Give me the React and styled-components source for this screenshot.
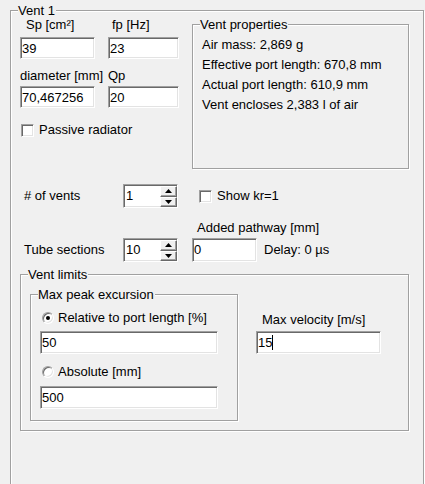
import React from "react";
import styled, { createGlobalStyle } from "styled-components";

const GlobalStyle = createGlobalStyle`
  html, body {
    margin: 0;
    padding: 0;
    background: #f0f0f0;
    overflow: hidden;
  }
  body {
    font-family: "Liberation Sans", Arial, sans-serif;
    font-size: 13px;
    color: #000;
  }
`;

const Page = styled.div`
  box-sizing: border-box;
  width: 425px;
  height: 484px;
  overflow: hidden;
  padding: 10px 2px 0 10px;
`;

// etched group box, caption sits on the top line
const Group = styled.div`
  position: relative;
  box-sizing: border-box;
  flex: none;
  width: ${(p) => p.$w}px;
  height: ${(p) => p.$h}px;
  margin: ${(p) => p.$m || 0};
  border: 1px solid #a0a0a0;
  box-shadow: inset 1px 1px 0 #fff, 1px 1px 0 #fff;
`;

const Caption = styled.span`
  position: absolute;
  top: -8px;
  left: 7px;
  padding-right: 1px;
  line-height: 16px;
  background: #f0f0f0;
  white-space: nowrap;
`;

const Top = styled.div`
  display: flex;
  padding-left: 9px;
`;

const LeftCol = styled.div`
  width: 172px;
  display: flex;
  flex-direction: column;
`;

const Pair = styled.div`
  display: grid;
  grid-template-columns: 88px 84px;
  margin-top: ${(p) => p.$mt}px;
`;

const Label = styled.span`
  line-height: 16px;
  white-space: nowrap;
  padding-left: ${(p) => p.$pl || 0}px;
`;

const Edit = styled.div`
  box-sizing: border-box;
  width: ${(p) => p.$w}px;
  height: ${(p) => p.$h || 22}px;
  padding-left: 1px;
  display: flex;
  align-items: center;
  background: #fff;
  border: 1px solid;
  border-color: #a0a0a0 #fff #fff #a0a0a0;
  box-shadow: inset 1px 1px 0 #696969, inset -1px -1px 0 #e3e3e3;
  white-space: nowrap;
`;

const Caret = styled.span`
  display: inline-block;
  width: 1px;
  height: 15px;
  background: #000;
`;

const CheckRow = styled.label`
  display: flex;
  align-items: center;
  gap: ${(p) => p.$gap || 5}px;
  line-height: 16px;
  margin-top: ${(p) => p.$mt || 0}px;
  padding-left: ${(p) => p.$pl || 0}px;
  white-space: nowrap;
`;

const CheckBox = styled.span`
  box-sizing: border-box;
  flex: none;
  width: 13px;
  height: 13px;
  background: #fff;
  border: 1px solid;
  border-color: #a0a0a0 #fff #fff #a0a0a0;
  box-shadow: inset 1px 1px 0 #696969, inset -1px -1px 0 #e3e3e3;
`;

const Radio = styled.span`
  box-sizing: border-box;
  flex: none;
  position: relative;
  width: 12px;
  height: 12px;
  border-radius: 50%;
  background: #fff;
  border: 1px solid;
  border-color: #a0a0a0 #fff #fff #a0a0a0;
  box-shadow: inset 1px 1px 0 #696969, inset -1px -1px 0 #e3e3e3;

  &::after {
    content: "";
    display: ${(p) => (p.$on ? "block" : "none")};
    position: absolute;
    left: 3px;
    top: 3px;
    width: 4px;
    height: 4px;
    border-radius: 50%;
    background: #000;
  }
`;

const Info = styled.div`
  padding: 10px 0 0 9px;
  line-height: 20px;
  white-space: nowrap;
`;

const Mid = styled.div`
  display: grid;
  grid-template-columns: 99px 69px 200px;
  grid-template-rows: 24px 30px 24px;
  align-items: center;
  padding-left: 13px;
  margin-top: 15px;
`;

const Spin = styled.div`
  box-sizing: border-box;
  width: 55px;
  height: 24px;
  display: flex;
  background: #fff;
  border: 1px solid;
  border-color: #a0a0a0 #fff #fff #a0a0a0;
  box-shadow: inset 1px 1px 0 #696969, inset -1px -1px 0 #e3e3e3;
  padding: 1px 0 0 1px;
`;

const SpinValue = styled.span`
  flex: 1;
  padding-left: 1px;
  line-height: 20px;
`;

const SpinButtons = styled.div`
  width: 17px;
  display: flex;
  flex-direction: column;
`;

const SpinButton = styled.div`
  flex: 1;
  display: flex;
  align-items: center;
  justify-content: center;
  background: #f0f0f0;
  border: 1px solid;
  border-color: #fff #696969 #696969 #fff;
  box-shadow: inset -1px -1px 0 #a0a0a0;
`;

const Cell = styled.div`
  display: flex;
  align-items: center;
  align-self: ${(p) => p.$align || "center"};
  padding-left: ${(p) => p.$pl || 0}px;
  padding-bottom: ${(p) => p.$pb || 0}px;
  gap: ${(p) => p.$gap || 0}px;
  grid-column: ${(p) => p.$col || "auto"};
  line-height: 16px;
  white-space: nowrap;
`;

const Limits = styled.div`
  display: flex;
  padding: 19px 0 0 9px;
`;

const Stack = styled.div`
  display: flex;
  flex-direction: column;
  align-items: flex-start;
  padding-left: ${(p) => p.$pl || 0}px;
  margin-left: ${(p) => p.$ml || 0}px;
`;

const Gap = styled.div`
  height: ${(p) => p.$h}px;
  flex: none;
`;

const Arrow = ({ up }) => (
  <svg width="7" height="4" viewBox="0 0 7 4">
    <polygon points={up ? "3.5,0 7,4 0,4" : "0,0 7,0 3.5,4"} fill="#000" />
  </svg>
);

const SpinField = ({ value }) => (
  <Spin>
    <SpinValue>{value}</SpinValue>
    <SpinButtons>
      <SpinButton>
        <Arrow up />
      </SpinButton>
      <SpinButton>
        <Arrow />
      </SpinButton>
    </SpinButtons>
  </Spin>
);

export default function App() {
  return (
    <>
      <GlobalStyle />
      <Page>
        <Group $w={414} $h={475}>
          <Caption>Vent 1</Caption>

          <Top>
            <LeftCol>
              <Pair $mt={6}>
                <Label $pl={6}>Sp [cm²]</Label>
                <Label $pl={4}>fp [Hz]</Label>
              </Pair>
              <Pair $mt={4}>
                <Edit $w={75}>39</Edit>
                <Edit $w={71}>23</Edit>
              </Pair>
              <Pair $mt={9}>
                <Label>diameter [mm]</Label>
                <Label $pl={-1}>Qp</Label>
              </Pair>
              <Pair $mt={2}>
                <Edit $w={75}>70,467256</Edit>
                <Edit $w={71}>20</Edit>
              </Pair>
              <CheckRow $mt={14} $pl={1}>
                <CheckBox />
                Passive radiator
              </CheckRow>
            </LeftCol>

            <Group $w={217} $h={145} $m="13px 0 0 0">
              <Caption>Vent properties</Caption>
              <Info>
                <div>Air mass: 2,869 g</div>
                <div>Effective port length: 670,8 mm</div>
                <div>Actual port length: 610,9 mm</div>
                <div>Vent encloses 2,383 l of air</div>
              </Info>
            </Group>
          </Top>

          <Mid>
            <Cell># of vents</Cell>
            <SpinField value="1" />
            <Cell $pl={7}>
              <CheckRow>
                <CheckBox />
                Show kr=1
              </CheckRow>
            </Cell>

            <Cell $col="3" $align="end" $pl={5} $pb={2}>
              Added pathway [mm]
            </Cell>

            <Cell>Tube sections</Cell>
            <SpinField value="10" />
            <Cell $gap={7}>
              <Edit $w={65} $h={24}>0</Edit>
              Delay: 0 µs
            </Cell>
          </Mid>

          <Group $w={389} $h={157} $m="12px 0 0 9px">
            <Caption>Vent limits</Caption>
            <Limits>
              <Group $w={208} $h={127}>
                <Caption>Max peak excursion</Caption>
                <Stack $pl={9}>
                  <Gap $h={15} />
                  <CheckRow $pl={2} $gap={4}>
                    <Radio $on />
                    Relative to port length [%]
                  </CheckRow>
                  <Gap $h={5} />
                  <Edit $w={178} $h={23}>50</Edit>
                  <Gap $h={10} />
                  <CheckRow $pl={2} $gap={4}>
                    <Radio />
                    Absolute [mm]
                  </CheckRow>
                  <Gap $h={6} />
                  <Edit $w={178} $h={23}>500</Edit>
                </Stack>
              </Group>

              <Stack $ml={18}>
                <Gap $h={18} />
                <Label $pl={6}>Max velocity [m/s]</Label>
                <Gap $h={3} />
                <Edit $w={125} $h={23}>
                  15
                  <Caret />
                </Edit>
              </Stack>
            </Limits>
          </Group>
        </Group>
      </Page>
    </>
  );
}
